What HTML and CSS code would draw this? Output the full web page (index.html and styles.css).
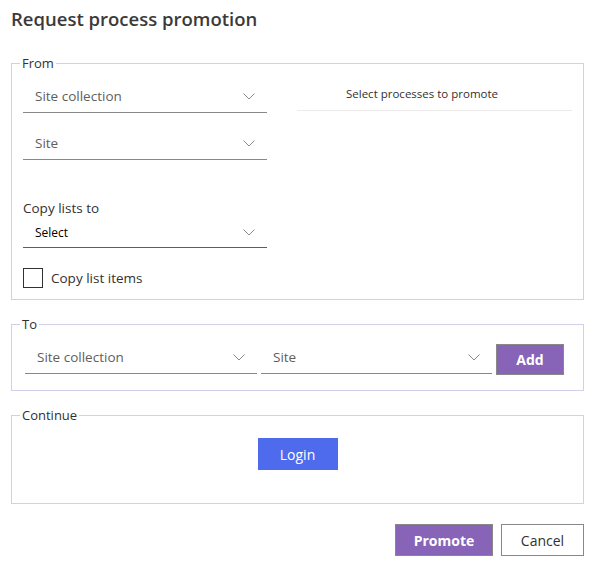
FILE: index.html
```html
<!DOCTYPE html>
<html lang="en">
<head>
  <meta charset="UTF-8">
  <meta name="viewport" content="width=device-width, initial-scale=1.0">
  <title>Request process promotion</title>
  <link rel="stylesheet" href="styles.css">
</head>
<body>
  <div class="dialog">
    <h1 class="title">Request process promotion</h1>

    <fieldset class="group">
      <legend>From</legend>
      <div class="group-body from-body">
        <div class="from-left">
          <div class="dropdown">
            <span>Site collection</span>
            <svg class="chevron" width="12" height="7" viewBox="0 0 12 7"><polyline points="0.5,0.5 6,6 11.5,0.5" fill="none" stroke="#8a8886" stroke-width="1"/></svg>
          </div>
          <div class="dropdown">
            <span>Site</span>
            <svg class="chevron" width="12" height="7" viewBox="0 0 12 7"><polyline points="0.5,0.5 6,6 11.5,0.5" fill="none" stroke="#8a8886" stroke-width="1"/></svg>
          </div>
          <label class="field-label">Copy lists to</label>
          <div class="dropdown dropdown-small">
            <span>Select</span>
            <svg class="chevron" width="12" height="7" viewBox="0 0 12 7"><polyline points="0.5,0.5 6,6 11.5,0.5" fill="none" stroke="#8a8886" stroke-width="1"/></svg>
          </div>
          <label class="checkbox">
            <span class="box"></span>
            <span>Copy list items</span>
          </label>
        </div>
        <div class="from-right">
          <div class="process-header">Select processes to promote</div>
        </div>
      </div>
    </fieldset>

    <fieldset class="group">
      <legend>To</legend>
      <div class="group-body to-body">
        <div class="dropdown">
          <span>Site collection</span>
          <svg class="chevron" width="12" height="7" viewBox="0 0 12 7"><polyline points="0.5,0.5 6,6 11.5,0.5" fill="none" stroke="#8a8886" stroke-width="1"/></svg>
        </div>
        <div class="dropdown">
          <span>Site</span>
          <svg class="chevron" width="12" height="7" viewBox="0 0 12 7"><polyline points="0.5,0.5 6,6 11.5,0.5" fill="none" stroke="#8a8886" stroke-width="1"/></svg>
        </div>
        <button class="btn btn-primary btn-add">Add</button>
      </div>
    </fieldset>

    <fieldset class="group">
      <legend>Continue</legend>
      <div class="group-body continue-body">
        <button class="btn btn-login">Login</button>
      </div>
    </fieldset>

    <div class="footer">
      <button class="btn btn-primary btn-promote">Promote</button>
      <button class="btn btn-default btn-cancel">Cancel</button>
    </div>
  </div>
</body>
</html>
```

FILE: styles.css
```css
body {
  margin: 0;
  font-family: "Open Sans", "Noto Sans", Arial, sans-serif;
  font-size: 13.5px;
  color: #323130;
  background: #fff;
}
.dialog {
  width: 573px;
  margin-left: 11px;
}
.title {
  margin: 5px 0 21px;
  font-size: 18.5px;
  line-height: 28px;
  font-weight: 600;
  color: #3b3a39;
}
.group {
  margin: 0 0 15px;
  padding: 0;
  border: 1px solid #d6cee8;
  min-width: 0;
}
.group legend {
  margin-left: 8px;
  padding: 0 2px;
  font-size: 13px;
  line-height: 18px;
  color: #323130;
}
.from-body {
  display: grid;
  grid-template-columns: 244px 275px;
  column-gap: 30px;
  padding: 8px 11px 11px;
}
.dropdown {
  display: flex;
  align-items: center;
  justify-content: space-between;
  height: 32px;
  padding: 0 12px;
  border-bottom: 1px solid #8a8886;
  color: #605e5c;
}
.from-left .dropdown + .dropdown {
  margin-top: 14px;
}
.chevron {
  flex: none;
}
.field-label {
  display: block;
  margin-top: 38px;
  line-height: 20px;
}
.dropdown-small {
  height: 29px;
  font-size: 12px;
  color: #000;
  border-bottom-color: #605e5c;
}
.checkbox {
  display: flex;
  align-items: center;
  gap: 8px;
  margin-top: 20px;
  line-height: 20px;
}
.box {
  width: 18px;
  height: 18px;
  border: 1px solid #323130;
}
.process-header {
  padding: 6px 0 8px 49px;
  font-size: 11.5px;
  line-height: 16px;
  border-bottom: 1px solid #edebe9;
}
.to-body {
  display: grid;
  grid-template-columns: 232px 231px 68px;
  column-gap: 4px;
  align-items: end;
  padding: 8px 18px 16px 13px;
}
.btn {
  font-family: inherit;
  font-size: 14px;
  cursor: pointer;
}
.btn-primary {
  background-color: #8764b8;
  color: #fff;
  font-weight: 700;
  border: 1px solid #8a8886;
}
.btn-add {
  height: 31px;
  margin-bottom: -1px;
}
.continue-body {
  display: flex;
  justify-content: center;
  padding: 14px 0 33px;
}
.btn-login {
  width: 80px;
  height: 32px;
  background-color: #4f6bed;
  color: #fff;
  border: none;
}
.footer {
  display: flex;
  justify-content: flex-end;
  gap: 8px;
  margin-top: 20px;
}
.btn-promote {
  width: 98px;
  height: 32px;
}
.btn-default {
  background: #fff;
  color: #323130;
  border: 1px solid #8a8886;
}
.btn-cancel {
  width: 83px;
  height: 32px;
}
```
